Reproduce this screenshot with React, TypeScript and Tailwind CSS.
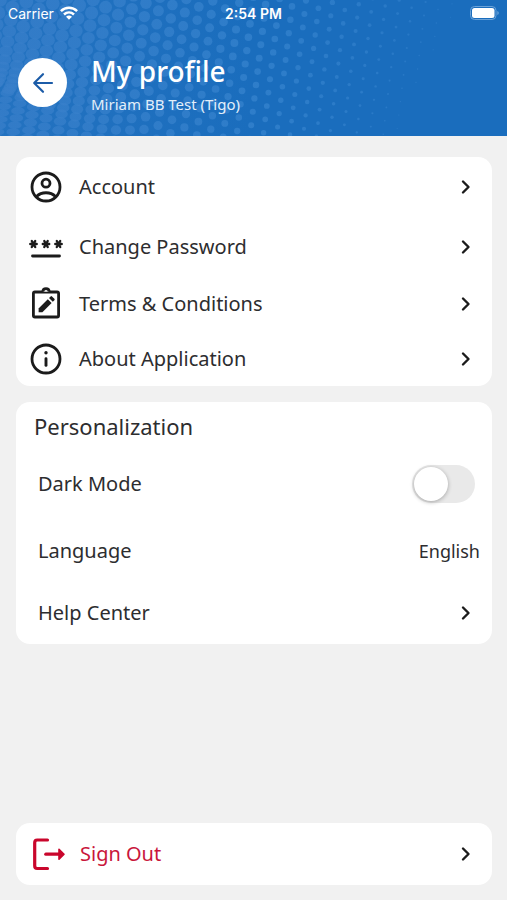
import { useState } from "react";
import type { ReactNode } from "react";

type Dot = { x: number; y: number; rx: number; ry: number };

// Slanted hexagonal grid whose dots shrink to the right and whose rows flatten at the lower left.
function buildHalftone(): Dot[] {
  const dots: Dot[] = [];
  for (let i = -20; i < 60; i++) {
    for (let j = -50; j < 50; j++) {
      const x = i * 12.4 + j * 1.6;
      const flatY = i * 7.6 - j * 13.4;
      if (x < -8 || x > 470 || flatY < -8 || flatY > 260) continue;
      const squeeze = 0.45 * Math.max(0, (150 - x) / 150) * Math.min(1, Math.max(0, flatY / 160));
      const y = flatY * (1 - squeeze);
      if (y > 145) continue;
      const r = Math.min(6.8, 8.2 - (x + y * 0.5) / 60);
      if (r > 0.5) dots.push({ x, y, rx: r, ry: r * (1 - squeeze * 1.1) });
    }
  }
  return dots;
}

const halftone = buildHalftone();

function Halftone() {
  return (
    <svg className="absolute inset-0 h-full w-full" aria-hidden="true">
      <defs>
        <linearGradient id="dotFade" gradientUnits="userSpaceOnUse" x1="0" y1="0" x2="450" y2="0">
          <stop offset="0" stopColor="#397fca" stopOpacity="0.7" />
          <stop offset="0.6" stopColor="#3583ce" stopOpacity="0.75" />
          <stop offset="1" stopColor="#3583ce" stopOpacity="0.45" />
        </linearGradient>
        <linearGradient id="leftTint" x1="0" y1="0" x2="1" y2="0">
          <stop offset="0" stopColor="#3a7fc8" stopOpacity="0.3" />
          <stop offset="0.5" stopColor="#3a7fc8" stopOpacity="0" />
        </linearGradient>
      </defs>
      <rect width="100%" height="100%" fill="url(#leftTint)" />
      <g fill="url(#dotFade)">
        {halftone.map((d, i) => (
          <ellipse key={i} cx={d.x} cy={d.y} rx={d.rx} ry={d.ry} />
        ))}
      </g>
    </svg>
  );
}

function Chevron() {
  return (
    <svg className="h-4 w-4 shrink-0" viewBox="0 0 16 16" fill="none" stroke="#1b1b1b" strokeWidth="2.4" strokeLinecap="round" strokeLinejoin="round" aria-hidden="true">
      <path d="M5 2.5 10.5 8 5 13.5" />
    </svg>
  );
}

function AccountIcon() {
  return (
    <svg className="h-9 w-9" viewBox="0 0 36 36" fill="none" stroke="#1b1b1b" strokeWidth="2.8" aria-hidden="true">
      <circle cx="18" cy="18" r="14" />
      <circle cx="18" cy="14.2" r="4" />
      <path d="M8.5 27.5c5-5 14-5 19 0" />
    </svg>
  );
}

function PasswordIcon() {
  return (
    <svg className="h-9 w-9" viewBox="0 0 36 36" fill="none" stroke="#1b1b1b" strokeWidth="2.4" strokeLinecap="round" aria-hidden="true">
      {[5.5, 18, 30.5].map((x) => (
        <path key={x} d={`M${x - 3.2} 15h6.4M${x - 1.7} 12l3.4 6M${x + 1.7} 12l-3.4 6`} />
      ))}
      <path d="M4.5 27h27" strokeWidth="2.8" />
    </svg>
  );
}

function TermsIcon() {
  return (
    <svg className="h-9 w-9" viewBox="0 0 36 36" fill="none" stroke="#1b1b1b" strokeWidth="2.8" strokeLinejoin="round" aria-hidden="true">
      <rect x="5.4" y="6" width="25.2" height="25" rx="1.5" />
      <path d="M14.8 5.8c.2-4.2 6.2-4.2 6.4 0" fill="#ffffff" />
      <path d="M10.6 26.2v-3.8l9.2-9.2 3.8 3.8-9.2 9.2z" fill="#1b1b1b" stroke="none" />
      <path d="m21 12 1.6-1.6q.7-.7 1.4 0l2.4 2.4q.7.7 0 1.4l-1.6 1.6z" fill="#1b1b1b" stroke="none" />
    </svg>
  );
}

function InfoIcon() {
  return (
    <svg className="h-9 w-9" viewBox="0 0 36 36" fill="none" stroke="#1b1b1b" strokeWidth="2.8" aria-hidden="true">
      <circle cx="18" cy="18" r="14" />
      <path d="M18 17.8v6.6" strokeWidth="2.9" strokeLinecap="round" />
      <circle cx="18" cy="11.8" r="1.7" fill="#1b1b1b" stroke="none" />
    </svg>
  );
}

function SignOutIcon() {
  return (
    <svg className="h-9 w-9 overflow-visible" viewBox="0 0 36 36" fill="none" stroke="#c9062c" strokeWidth="3.2" strokeLinecap="round" strokeLinejoin="round" aria-hidden="true">
      <path d="M19.5 4H9.2Q6.7 4 6.7 6.7v23q0 2.8 2.5 2.8h10.3" />
      <path d="M17.8 18.2h14" />
      <path d="m31 13.2 5 5-5 5z" fill="#c9062c" strokeWidth="1.6" />
    </svg>
  );
}

function MenuRow({ icon, label, height }: { icon: ReactNode; label: string; height: string }) {
  return (
    <button type="button" className={`flex w-full items-center pr-[18px] pl-3 text-left ${height}`}>
      {icon}
      <span className="ml-[15px] flex-1 text-xl">{label}</span>
      <Chevron />
    </button>
  );
}

function StatusBar() {
  return (
    <div className="relative grid h-[26px] grid-cols-3 items-center px-2 font-[Inter,sans-serif] text-[14px] text-white">
      <div className="flex items-center gap-[6px]">
        <span>Carrier</span>
        <svg className="h-[14px] w-[18px]" viewBox="0 0 18 14" fill="none" stroke="currentColor" strokeWidth="2.5" aria-label="Wi-Fi">
          <path d="M.9 5.2c4.6-4.5 11.6-4.5 16.2 0M4 8.5c2.9-2.8 7.1-2.8 10 0" />
          <path d="m9 13.8-3-3.1c1.7-1.6 4.3-1.6 6 0z" fill="currentColor" stroke="none" />
        </svg>
      </div>
      <span className="text-center font-semibold">2:54 PM</span>
      <svg className="h-[14px] w-[29px] justify-self-end" viewBox="0 0 29 14" aria-label="Battery">
        <rect x="0.5" y="0.5" width="25.5" height="13" rx="4" fill="none" stroke="#6ba2d8" />
        <rect x="2" y="2" width="22.5" height="10" rx="2.5" fill="#ffffff" />
        <path d="M27.3 5v4q1.5-.5 1.5-2t-1.5-2" fill="#6ba2d8" />
      </svg>
    </div>
  );
}

export default function App() {
  const [dark, setDark] = useState(false);
  return (
    <div className="flex min-h-screen flex-col bg-[#f1f1f1] font-['Noto_Sans',sans-serif] text-[#2d2d2f]">
      <header className="relative overflow-hidden bg-[#1a6dbd] pb-[19px] text-white">
        <Halftone />
        <StatusBar />
        <div className="relative mt-[27px] flex items-start pl-[18px]">
          <button type="button" aria-label="Back" className="mt-[5px] flex h-[49px] w-[49px] items-center justify-center rounded-full bg-white">
            <svg className="h-6 w-6" viewBox="0 0 24 24" fill="none" stroke="#1c5ca8" strokeWidth="2.2" strokeLinecap="round" strokeLinejoin="round" aria-hidden="true">
              <path d="M21 12H3.5M12 3.2 3.2 12l8.8 8.8" />
            </svg>
          </button>
          <div className="ml-6">
            <h1 className="text-[28px] leading-9 font-medium">My profile</h1>
            <p className="pt-[2px] text-[15px] leading-[26px] text-[#e3effa]">Miriam BB Test (Tigo)</p>
          </div>
        </div>
      </header>
      <main className="flex flex-1 flex-col gap-4 pt-[21px] pr-[15px] pb-[15px] pl-4">
        <nav aria-label="Profile" className="rounded-[14px] bg-white">
          <MenuRow icon={<AccountIcon />} label="Account" height="h-[60px]" />
          <MenuRow icon={<PasswordIcon />} label="Change Password" height="h-[60px]" />
          <MenuRow icon={<TermsIcon />} label="Terms & Conditions" height="h-[54px]" />
          <MenuRow icon={<InfoIcon />} label="About Application" height="h-[55px]" />
        </nav>
        <section className="rounded-[14px] bg-white pb-[3px]">
          <h2 className="flex h-12 items-center pl-[18px] text-[22px]">Personalization</h2>
          <div className="flex h-[67px] items-center justify-between pr-[17px] pl-[22px]">
            <label htmlFor="dark-mode" className="text-xl">Dark Mode</label>
            <input
              id="dark-mode"
              type="checkbox"
              role="switch"
              checked={dark}
              onChange={(e) => setDark(e.target.checked)}
              className="h-[38px] w-[63px] appearance-none rounded-full bg-[#e9e9e9] p-[2px] before:block before:h-[34px] before:w-[34px] before:rounded-full before:bg-white before:shadow-[0_1px_4px_rgba(0,0,0,0.3)] before:content-[''] checked:bg-[#1a6dbd] checked:before:ml-auto"
            />
          </div>
          <button type="button" className="flex h-[68px] w-full items-center justify-between pr-3 pl-[22px] text-left">
            <span className="text-xl">Language</span>
            <span className="text-lg">English</span>
          </button>
          <button type="button" className="flex h-14 w-full items-center justify-between pr-[18px] pl-[22px] text-left">
            <span className="text-xl">Help Center</span>
            <Chevron />
          </button>
        </section>
        <button type="button" className="mt-auto flex h-[62px] items-center rounded-[14px] bg-white pr-[18px] pl-3 text-left">
          <SignOutIcon />
          <span className="ml-4 flex-1 text-xl text-[#c9163b]">Sign Out</span>
          <Chevron />
        </button>
      </main>
    </div>
  );
}
